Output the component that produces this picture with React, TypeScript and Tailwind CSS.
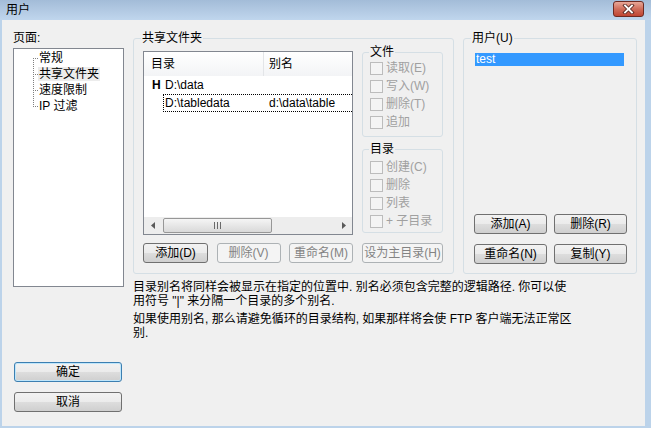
import React from 'react';

const pages = ['常规', '共享文件夹', '速度限制', 'IP 过滤'];

function Btn({ label, className = '', disabled, isDefault }: { label: string; className?: string; disabled?: boolean; isDefault?: boolean }) {
  const look = disabled
    ? 'border-[#adb2b5] bg-[#f4f4f4] text-[#838383]'
    : isDefault
      ? 'border-[#3c7fb1] bg-[linear-gradient(#f2f2f2_0%,#ebebeb_50%,#dddddd_51%,#cfcfcf_100%)] text-black shadow-[inset_0_0_0_1px_#bfe6fb]'
      : 'border-[#707070] bg-[linear-gradient(#f2f2f2_0%,#ebebeb_50%,#dddddd_51%,#cfcfcf_100%)] text-black';
  return (
    <div className={`flex h-[20px] items-center justify-center rounded-[3px] border leading-none ${look} ${className}`}>
      {label}
    </div>
  );
}

function Check({ label }: { label: string }) {
  return (
    <div className="flex h-[18px] items-center">
      <span className="h-[13px] w-[13px] border border-[#bcbcbc] bg-[#f4f4f4]" />
      <span className="ml-[3px] text-[#a0a0a0]">{label}</span>
    </div>
  );
}

function CloseGlyph() {
  return (
    <svg width="13" height="10" viewBox="0 0 13 10">
      <path d="M3 1.5 L10 8.5 M10 1.5 L3 8.5" stroke="#5a2a24" strokeWidth="3.6" strokeLinecap="square" />
      <path d="M3 1.5 L10 8.5 M10 1.5 L3 8.5" stroke="#ffffff" strokeWidth="1.8" strokeLinecap="square" />
    </svg>
  );
}

// dotted tree connector for one row
function TreeLine({ first, last }: { first: boolean; last: boolean }) {
  return (
    <svg width="5" height="16" viewBox="0 0 5 16" className="shrink-0">
      {!first && <line x1="0.5" y1="0" x2="0.5" y2="8" stroke="#808080" strokeDasharray="1 1" />}
      {!last && <line x1="0.5" y1="8" x2="0.5" y2="16" stroke="#808080" strokeDasharray="1 1" />}
      <line x1="0" y1="8.5" x2="5" y2="8.5" stroke="#808080" strokeDasharray="1 1" />
    </svg>
  );
}

export default function App() {
  return (
    <div className="flex h-[428px] w-[651px] flex-col bg-[#bcd3ea] text-[12px] text-black font-['Liberation_Sans','Noto_Sans_CJK_SC',sans-serif]">
      {/* title bar */}
      <div className="flex h-[20px] items-start justify-between bg-gradient-to-b from-[#a3bcd8] to-[#c0d6ed] pl-[6px] pr-[7px]">
        <span className="mt-[3px] leading-[14px]">用户</span>
        <div className="mt-[1px] flex h-[16px] w-[31px] items-center justify-center rounded-[3px] border border-[#6d2a22] bg-gradient-to-b from-[#e8a899] via-[#cf6c5a] to-[#c04431]">
          <CloseGlyph />
        </div>
      </div>

      {/* client */}
      <div className="mb-[2px] ml-[2px] mr-[6px] flex flex-1 bg-[#f0f0f0] pl-[11px] pt-[11px]">
        {/* left column */}
        <div className="flex w-[111px] flex-col">
          <div className="h-[14px] leading-[14px]">页面:</div>
          <div className="mt-[3px] h-[239px] border border-[#828790] bg-white pt-[1px]">
            {pages.map((p, i) => (
              <div key={p} className="flex h-[16px] items-center pl-[19px]">
                <TreeLine first={i === 0} last={i === pages.length - 1} />
                <span className={`px-[1px] leading-[14px] ${i === 1 ? 'bg-[#ececec]' : ''}`}>{p}</span>
              </div>
            ))}
          </div>
          <Btn label="确定" isDefault className="ml-[1px] mt-[75px] w-[108px]" />
          <Btn label="取消" className="ml-[1px] mt-[10px] w-[108px]" />
        </div>

        {/* right area */}
        <div className="ml-[9px] flex flex-col">
          <div className="flex gap-[9px]">
            {/* shared folders */}
            <fieldset className="h-[243px] w-[321px] rounded-[3px] border border-[#d5dfe5]">
              <legend className="ml-[7px] px-[1px] leading-[14px]">共享文件夹</legend>
              <div className="flex pl-[9px]">
                <div className="flex w-[210px] flex-col">
                  <div className="mt-[6px] flex h-[184px] flex-col overflow-hidden border border-[#828790] bg-white">
                    <div className="flex h-[24px] bg-gradient-to-b from-white to-[#f3f4f6]">
                      <div className="flex w-[120px] items-center border-r border-[#e3e5e8] pl-[7px]">目录</div>
                      <div className="flex flex-1 items-center pl-[5px]">别名</div>
                    </div>
                    <div className="flex h-[18px] items-center pl-[8px]">
                      <span className="w-[13px] font-bold leading-none">H</span>
                      <span>D:\data</span>
                    </div>
                    <div className="flex h-[18px] pl-[19px]">
                      <div className="-mr-[2px] flex flex-1 items-center border border-dotted border-black">
                        <span className="w-[105px] pl-[1px]">D:\tabledata</span>
                        <span>d:\data\table</span>
                      </div>
                    </div>
                    <div className="mt-auto flex h-[17px] bg-[#ededed]">
                      <div className="flex w-[17px] items-center justify-center">
                        <svg width="4" height="7" viewBox="0 0 4 7"><path d="M4 0 L0 3.5 L4 7 Z" fill="#5a5a5a" /></svg>
                      </div>
                      <div className="ml-[2px] mt-[1px] flex h-[15px] w-[109px] items-center justify-center gap-[2px] rounded-[2px] border border-[#979797] bg-gradient-to-b from-[#f5f5f5] to-[#d9d9d9]">
                        <span className="h-[7px] w-[1px] bg-[#6a6a6a]" />
                        <span className="h-[7px] w-[1px] bg-[#6a6a6a]" />
                        <span className="h-[7px] w-[1px] bg-[#6a6a6a]" />
                      </div>
                      <div className="ml-auto flex w-[17px] items-center justify-center">
                        <svg width="4" height="7" viewBox="0 0 4 7"><path d="M0 0 L4 3.5 L0 7 Z" fill="#5a5a5a" /></svg>
                      </div>
                    </div>
                  </div>
                  <div className="mt-[8px] flex justify-between">
                    <Btn label="添加(D)" className="w-[65px]" />
                    <Btn label="删除(V)" disabled className="w-[64px]" />
                    <Btn label="重命名(M)" disabled className="w-[64px]" />
                  </div>
                </div>

                <div className="ml-[9px] flex w-[81px] flex-col">
                  <fieldset className="h-[92px] rounded-[3px] border border-[#d5dfe5]">
                    <legend className="ml-[6px] px-[1px] leading-[14px]">文件</legend>
                    <div className="pl-[7px]">
                      <Check label="读取(E)" />
                      <Check label="写入(W)" />
                      <Check label="删除(T)" />
                      <Check label="追加" />
                    </div>
                  </fieldset>
                  <fieldset className="mt-[5px] h-[91px] rounded-[3px] border border-[#d5dfe5]">
                    <legend className="ml-[6px] px-[1px] leading-[14px]">目录</legend>
                    <div className="pl-[7px] pt-[2px]">
                      <Check label="创建(C)" />
                      <Check label="删除" />
                      <Check label="列表" />
                      <Check label="+ 子目录" />
                    </div>
                  </fieldset>
                  <Btn label="设为主目录(H)" disabled className="mt-[10px] w-[81px]" />
                </div>
              </div>
            </fieldset>

            {/* users */}
            <fieldset className="h-[243px] w-[174px] rounded-[3px] border border-[#d5dfe5]">
              <legend className="ml-[7px] px-[1px] leading-[14px]">用户(U)</legend>
              <div className="flex h-[228px] flex-col pl-[10px]">
                <div className="mt-[7px] w-[151px] flex-1 p-[1px]">
                  <div className="h-[13px] bg-[#3399ff] pl-[1px] leading-[13px] text-white">test</div>
                </div>
                <div className="flex gap-[7px]">
                  <Btn label="添加(A)" className="w-[73px]" />
                  <Btn label="删除(R)" className="w-[73px]" />
                </div>
                <div className="mb-[9px] mt-[10px] flex gap-[7px]">
                  <Btn label="重命名(N)" className="w-[73px]" />
                  <Btn label="复制(Y)" className="w-[73px]" />
                </div>
              </div>
            </fieldset>
          </div>

          <div className="mt-[6px] leading-[14px]">
            <p>
              目录别名将同样会被显示在指定的位置中. 别名必须包含完整的逻辑路径. 你可以使
              <br />
              用符号 "|" 来分隔一个目录的多个别名.
            </p>
            <p className="mt-[4px]">
              如果使用别名, 那么请避免循环的目录结构, 如果那样将会使 FTP 客户端无法正常区
              <br />
              别.
            </p>
          </div>
        </div>
      </div>
    </div>
  );
}
